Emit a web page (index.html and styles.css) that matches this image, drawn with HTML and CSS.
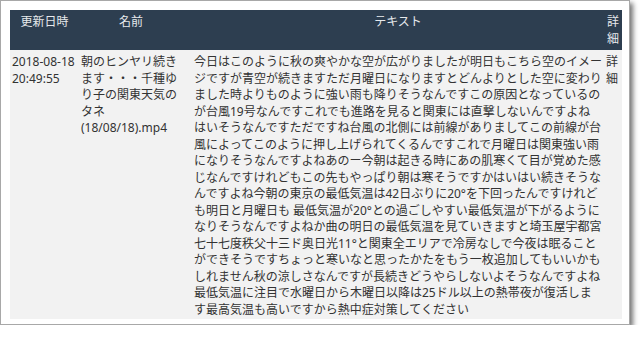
FILE: index.html
```html
<!DOCTYPE html>
<html lang="ja">
<head>
<meta charset="utf-8">
<link rel="stylesheet" href="styles.css">
</head>
<body>
<div class="frame">
  <table class="list">
    <colgroup>
      <col class="c-date">
      <col class="c-name">
      <col class="c-text">
      <col class="c-more">
    </colgroup>
    <thead>
      <tr>
        <th class="h-date">更新日時</th>
        <th class="h-name">名前</th>
        <th class="h-text">テキスト</th>
        <th class="h-more">詳細</th>
      </tr>
    </thead>
    <tbody>
      <tr>
        <td class="d-date">2018-08-18 20:49:55</td>
        <td class="d-name">朝のヒンヤリ続きます・・・千種ゆり子の関東天気のタネ (18/08/18).mp4</td>
        <td class="d-text">今日はこのように秋の爽やかな空が広がりましたが明日もこちら空のイメー<br>ジですが青空が続きますただ月曜日になりますとどんよりとした空に変わり<br>ました時よりものように強い雨も降りそうなんですこの原因となっているの<br>が台風19号なんですこれでも進路を見ると関東には直撃しないんですよね<br>はいそうなんですただですね台風の北側には前線がありましてこの前線が台<br>風によってこのように押し上げられてくるんですこれで月曜日は関東強い雨<br>になりそうなんですよねあのー今朝は起きる時にあの肌寒くて目が覚めた感<br>じなんですけれどもこの先もやっぱり朝は寒そうですかはいはい続きそうな<br>んですよね今朝の東京の最低気温は42日ぶりに20°を下回ったんですけれど<br>も明日と月曜日も 最低気温が20°との過ごしやすい最低気温が下がるように<br>なりそうなんですよねか曲の明日の最低気温を見ていきますと埼玉屋宇都宮<br>七十七度秩父十三ド奥日光11°と関東全エリアで冷房なしで今夜は眠ること<br>ができそうですちょっと寒いなと思ったかたをもう一枚追加してもいいかも<br>しれません秋の涼しさなんですが長続きどうやらしないよそうなんですよね<br>最低気温に注目で水曜日から木曜日以降は25ドル以上の熱帯夜が復活しま<br>す最高気温も高いですから熱中症対策してください</td>
        <td class="d-more">詳細</td>
      </tr>
    </tbody>
  </table>
</div>
</body>
</html>
```

FILE: styles.css
```css
html, body {
  margin: 0;
  padding: 0;
  background: #ffffff;
}

body {
  font-family: "Noto Sans", "Noto Sans CJK JP", sans-serif;
  font-size: 12px;
  color: #333333;
}

.frame {
  box-sizing: border-box;
  width: 630px;
  background: #ffffff;
  border: 1px solid #a8a8a8;
  padding: 9px 7px 5px 9px;
  box-shadow: 3px 3px 5px rgba(0, 0, 0, 0.55);
}

.list {
  table-layout: fixed;
  width: 612px;
  border-collapse: collapse;
  border-spacing: 0;
}

.c-date { width: 69px; }
.c-name { width: 113px; }
.c-text { width: 412px; }
.c-more { width: 18px; }

.list th {
  background: #2d3e50;
  color: #e6e9ec;
  font-weight: normal;
  text-align: center;
  vertical-align: top;
  line-height: 17px;
  padding: 3px 2px 3px 2px;
}

.list th.h-name {
  padding-right: 11px;
}

.list td {
  background: #f2f2f2;
  vertical-align: top;
  line-height: 16.5px;
  padding: 4px 2px 1px 2px;
  text-align: left;
}

.list td.d-name {
  padding-right: 11px;
}

.list td.d-text {
  white-space: nowrap;
}
```
